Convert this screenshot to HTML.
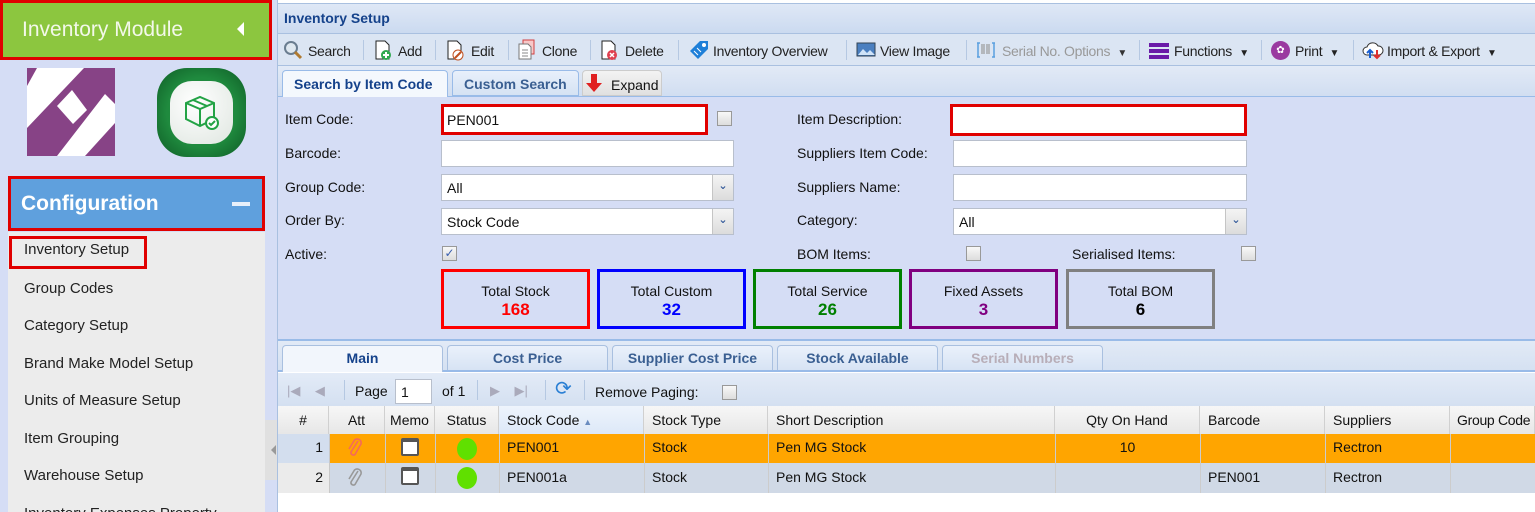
<!DOCTYPE html>
<html><head><meta charset="utf-8"><style>
*{box-sizing:border-box;margin:0;padding:0}
html,body{width:1535px;height:512px;overflow:hidden}
body{background:#fff;font-family:"Liberation Sans","DejaVu Sans",sans-serif;font-size:14px;color:#111;position:relative;white-space:nowrap}
.a{position:absolute}
.side{left:0;top:0;width:277px;height:512px;background:#d5ddf5}
.item{left:8px;width:257px;height:37px;background:#ececec;color:#222;padding:10px 0 0 16px;font-size:15px}
.inp{background:#fff;border:1px solid #b8bfcc;height:27px;padding:5px 5px;font-size:14px}
.sel .arr{position:absolute;right:0;top:0;width:21px;height:25px;background:linear-gradient(#f4f4f4,#dcdcdc);border-left:1px solid #c5c5c5;color:#345a9a;font-size:11px;text-align:center;line-height:22px;font-weight:bold}
.cb{width:15px;height:15px;border:1px solid #999;background:linear-gradient(#f8f8f8,#ddd)}
.lbl{font-size:14px;color:#111}
.tot{width:149px;height:60px;border:3px solid;text-align:center;font-size:14px;padding-top:11px;background:#d5ddf5}
.tot b{display:block;font-size:17px;margin-top:1px}
.tb{font-size:14px;color:#222;top:43px;letter-spacing:-0.3px}
.sep{top:40px;width:1px;height:20px;background:#b5c8e2}
.gt{top:345px;height:25px;border:1px solid #a9c0e0;border-bottom:none;border-radius:4px 4px 0 0;background:linear-gradient(#eaf1fb,#d7e3f4);color:#3a5f92;font-weight:bold;font-size:14px;text-align:center;padding-top:4px}
.hc{top:406px;height:29px;border-right:1px solid #d0d0d0;padding:6px 8px;font-size:14px;background:linear-gradient(#f7f7f7,#e6e6e6);overflow:hidden}
.r1{top:434px;height:29px;background:#ffa500}
.r2{top:463px;height:30px;background:#d0d9e6}
.c{font-size:14px;padding:5px 8px}
</style></head><body>
<div class="a side"></div>
<div class="a" style="left:0;top:0;width:272px;height:60px;background:#8cc63f;border:3px solid #e00000"></div>
<div class="a" style="left:22px;top:18px;color:#f3f8ea;font-size:21px">Inventory Module</div>
<div class="a" style="left:237px;top:22px;width:0;height:0;border-top:7px solid transparent;border-bottom:7px solid transparent;border-right:7px solid #fff"></div>
<svg class="a" style="left:27px;top:68px" width="88" height="88" viewBox="0 0 88 88"><rect width="88" height="88" fill="#874386"/><polygon points="10,0 57,0 0,60 0,18" fill="#fff"/><polygon points="30,38 45,22 60,42 46,56" fill="#fff"/><polygon points="78,26 88,36 88,55 58,88 30,88" fill="#fff"/></svg>
<div class="a" style="left:157px;top:68px;width:89px;height:89px;border-radius:30px;background:radial-gradient(circle,#1f8a3e 55%,#0e5a25);"></div>
<div class="a" style="left:170px;top:81px;width:63px;height:63px;border-radius:22px;background:radial-gradient(circle at 40% 35%,#fff,#dfe6e0)"></div>
<svg class="a" style="left:182px;top:93px" width="40" height="40" viewBox="0 0 40 40" fill="none" stroke="#23a345" stroke-width="2"><path d="M4 10 L18 4 L32 10 L32 26 L18 33 L4 26 Z M4 10 L18 16 L32 10 M18 16 V33 M11 7 L25 13"/><circle cx="30" cy="30" r="6" fill="#fff"/><path d="M27 30 l2 2 l4 -4"/></svg>
<div class="a" style="left:8px;top:176px;width:257px;height:55px;background:#5fa0dd;border:3px solid #e00000"></div>
<div class="a" style="left:21px;top:192px;color:#fff;font-weight:bold;font-size:21px">Configuration</div>
<div class="a" style="left:232px;top:202px;width:18px;height:4px;background:#e8f0fa"></div>
<div class="a" style="left:8px;top:232px;width:257px;height:280px;background:#ececec"></div>
<div class="a item" style="top:232px;padding-top:9px">Inventory Setup</div>
<div class="a" style="left:9px;top:236px;width:138px;height:33px;border:3px solid #e00000"></div>
<div class="a item" style="top:270px">Group Codes</div>
<div class="a item" style="top:307px">Category Setup</div>
<div class="a item" style="top:345px">Brand Make Model Setup</div>
<div class="a item" style="top:382px">Units of Measure Setup</div>
<div class="a item" style="top:420px">Item Grouping</div>
<div class="a item" style="top:457px">Warehouse Setup</div>
<div class="a item" style="top:495px">Inventory Expenses Property</div>
<div class="a" style="left:265px;top:420px;width:12px;height:60px;background:#e0e0e0"></div>
<div class="a" style="left:271px;top:445px;border-top:5px solid transparent;border-bottom:5px solid transparent;border-right:5px solid #999"></div>

<div class="a" style="left:277px;top:0;width:1258px;height:512px;background:#fff;border-left:1px solid #a9c0e0"></div>
<div class="a" style="left:278px;top:3px;width:1257px;height:31px;background:linear-gradient(#dfe8f6,#cbdaf0);border-top:1px solid #a9c0e0;border-bottom:1px solid #a9c0e0"></div>
<div class="a" style="left:284px;top:10px;color:#15428b;font-weight:bold;font-size:14px">Inventory Setup</div>
<div class="a" style="left:278px;top:34px;width:1257px;height:32px;background:#dbe5f3;border-bottom:1px solid #a9c0e0"></div>
<svg class="a" style="left:283px;top:40px" width="20" height="20"><circle cx="8" cy="8" r="6" fill="#dfe8f0" stroke="#6a7d90" stroke-width="2"/><line x1="12" y1="12" x2="18" y2="18" stroke="#b07a30" stroke-width="3"/></svg>
<div class="a tb" style="left:308px">Search</div><div class="a sep" style="left:363px"></div>
<svg class="a" style="left:373px;top:39px" width="20" height="22"><path d="M3 2h9l4 4v14H3z" fill="#fff" stroke="#222"/><circle cx="13" cy="16" r="5" fill="#2fa84f"/><path d="M13 13v6M10 16h6" stroke="#fff" stroke-width="2"/></svg>
<div class="a tb" style="left:398px">Add</div><div class="a sep" style="left:435px"></div>
<svg class="a" style="left:445px;top:39px" width="20" height="22"><path d="M3 2h9l4 4v14H3z" fill="#fff" stroke="#222"/><circle cx="13" cy="16" r="5" fill="#fff" stroke="#c05020"/><path d="M10 19l6-6" stroke="#c05020" stroke-width="2"/></svg>
<div class="a tb" style="left:471px">Edit</div><div class="a sep" style="left:508px"></div>
<svg class="a" style="left:517px;top:39px" width="20" height="22"><rect x="6" y="1" width="11" height="14" fill="#f8c8c8" stroke="#d04040"/><path d="M2 5h9l3 3v12H2z" fill="#fff" stroke="#777"/><path d="M5 11h6M5 14h6M5 17h6" stroke="#888"/></svg>
<div class="a tb" style="left:542px">Clone</div><div class="a sep" style="left:590px"></div>
<svg class="a" style="left:599px;top:39px" width="20" height="22"><path d="M3 2h9l4 4v14H3z" fill="#fff" stroke="#222"/><circle cx="13" cy="16" r="5" fill="#e04050"/><path d="M11 14l4 4M15 14l-4 4" stroke="#fff" stroke-width="1.5"/></svg>
<div class="a tb" style="left:625px">Delete</div><div class="a sep" style="left:678px"></div>
<svg class="a" style="left:688px;top:39px" width="22" height="22"><path d="M2 12L12 2h8v8L10 20z" fill="#1e7fd8"/><circle cx="16" cy="6" r="2" fill="#fff"/><path d="M6 12l4 4M9 9l4 4" stroke="#fff"/></svg>
<div class="a tb" style="left:713px">Inventory Overview</div><div class="a sep" style="left:846px"></div>
<svg class="a" style="left:856px;top:42px" width="20" height="16"><rect x="1" y="1" width="18" height="13" fill="#4a7fc0" stroke="#345"/><path d="M2 13l5-6 4 4 3-3 5 5z" fill="#cfe3f8"/></svg>
<div class="a tb" style="left:880px">View Image</div><div class="a sep" style="left:966px"></div>
<svg class="a" style="left:976px;top:41px" width="20" height="18"><path d="M2 2v14M18 2v14M1 2h3M1 16h3M16 2h3M16 16h3" stroke="#5aa0e0" stroke-width="1.5" fill="none"/><path d="M6 3v10M8 3v10M11 3v10M13 3v10" stroke="#999" stroke-width="1.2"/></svg>
<div class="a tb" style="left:1002px;color:#999">Serial No. Options &nbsp;<span style="color:#333;font-size:10px">▼</span></div><div class="a sep" style="left:1139px"></div>
<div class="a" style="left:1149px;top:43px;width:20px;height:4px;background:#6a1aa8;box-shadow:0 6px 0 #6a1aa8,0 12px 0 #6a1aa8"></div>
<div class="a tb" style="left:1174px">Functions &nbsp;<span style="font-size:10px">▼</span></div><div class="a sep" style="left:1261px"></div>
<div class="a" style="left:1271px;top:41px;width:19px;height:19px;border-radius:50%;background:#9a3aa0;color:#fff;font-size:10px;text-align:center;line-height:19px">✿</div>
<div class="a tb" style="left:1295px">Print &nbsp;<span style="font-size:10px">▼</span></div><div class="a sep" style="left:1353px"></div>
<svg class="a" style="left:1362px;top:40px" width="22" height="20"><path d="M5 15a4 4 0 010-8 6 6 0 0111-1 4 4 0 011 9z" fill="#fff" stroke="#333"/><path d="M8 18v-7M5 13l3-3 3 3" stroke="#1a5fd0" stroke-width="2" fill="none"/><path d="M15 10v7M12 15l3 3 3-3" stroke="#e03030" stroke-width="2" fill="none"/></svg>
<div class="a tb" style="left:1387px">Import &amp; Export &nbsp;<span style="font-size:10px">▼</span></div>

<div class="a" style="left:278px;top:66px;width:1257px;height:31px;background:linear-gradient(#e2eaf6,#d1def1);border-bottom:1px solid #99bbe8"></div>
<div class="a" style="left:282px;top:70px;width:166px;height:28px;background:#f4f8fd;border:1px solid #99bbe8;border-bottom:none;border-radius:4px 4px 0 0;color:#15428b;font-weight:bold;font-size:14px;padding:5px 0 0 11px">Search by Item Code</div>
<div class="a" style="left:452px;top:70px;width:127px;height:26px;background:linear-gradient(#e8f0fb,#d5e2f3);border:1px solid #99bbe8;border-radius:4px 4px 0 0;color:#3a5f92;font-weight:bold;font-size:14px;padding:5px 0 0 11px">Custom Search</div>
<div class="a" style="left:582px;top:70px;width:80px;height:26px;background:linear-gradient(#f3f3f3,#e0e0e0);border:1px solid #ccc;border-radius:4px 4px 0 0;font-size:14px;padding:6px 0 0 28px">Expand</div>
<svg class="a" style="left:585px;top:73px" width="18" height="20"><path d="M6 1h6v9h5L9 19 1 10h5z" fill="#e02020"/></svg>

<div class="a" style="left:278px;top:97px;width:1257px;height:244px;background:#d5ddf5;border-bottom:2px solid #99bbe8"></div>
<div class="a lbl" style="left:285px;top:111px">Item Code:</div>
<div class="a lbl" style="left:285px;top:145px">Barcode:</div>
<div class="a lbl" style="left:285px;top:179px">Group Code:</div>
<div class="a lbl" style="left:285px;top:212px">Order By:</div>
<div class="a lbl" style="left:285px;top:246px">Active:</div>
<div class="a inp" style="left:441px;top:104px;width:267px;height:31px;border:3px solid #e00000;padding:5px 3px">PEN001</div>
<div class="a cb" style="left:717px;top:111px"></div>
<div class="a inp" style="left:441px;top:140px;width:293px"></div>
<div class="a inp sel" style="left:441px;top:174px;width:293px">All<div class="arr">⌄</div></div>
<div class="a inp sel" style="left:441px;top:208px;width:293px">Stock Code<div class="arr">⌄</div></div>
<div class="a cb" style="left:442px;top:246px;color:#3a5fb0;font-size:12px;line-height:13px;text-align:center">✓</div>
<div class="a lbl" style="left:797px;top:111px">Item Description:</div>
<div class="a lbl" style="left:797px;top:145px">Suppliers Item Code:</div>
<div class="a lbl" style="left:797px;top:179px">Suppliers Name:</div>
<div class="a lbl" style="left:797px;top:212px">Category:</div>
<div class="a lbl" style="left:797px;top:246px">BOM Items:</div>
<div class="a lbl" style="left:1072px;top:246px">Serialised Items:</div>
<div class="a inp" style="left:950px;top:104px;width:297px;height:32px;border:3px solid #e00000"></div>
<div class="a inp" style="left:953px;top:140px;width:294px"></div>
<div class="a inp" style="left:953px;top:174px;width:294px"></div>
<div class="a inp sel" style="left:953px;top:208px;width:294px">All<div class="arr">⌄</div></div>
<div class="a cb" style="left:966px;top:246px"></div>
<div class="a cb" style="left:1241px;top:246px"></div>
<div class="a tot" style="left:441px;top:269px;border-color:#f00">Total Stock<b style="color:#f00">168</b></div>
<div class="a tot" style="left:597px;top:269px;border-color:#00f">Total Custom<b style="color:#00f">32</b></div>
<div class="a tot" style="left:753px;top:269px;border-color:#008000">Total Service<b style="color:#008000">26</b></div>
<div class="a tot" style="left:909px;top:269px;border-color:#800080">Fixed Assets<b style="color:#800080">3</b></div>
<div class="a tot" style="left:1066px;top:269px;border-color:#808080">Total BOM<b style="color:#000">6</b></div>

<div class="a" style="left:278px;top:341px;width:1257px;height:31px;background:linear-gradient(#e2eaf6,#d5e1f2);border-bottom:2px solid #99bbe8"></div>
<div class="a gt" style="left:282px;width:161px;background:#f2f6fc;height:27px;color:#15428b">Main</div>
<div class="a gt" style="left:447px;width:161px">Cost Price</div>
<div class="a gt" style="left:612px;width:161px">Supplier Cost Price</div>
<div class="a gt" style="left:777px;width:161px">Stock Available</div>
<div class="a gt" style="left:942px;width:161px;color:#b8aeb8">Serial Numbers</div>

<div class="a" style="left:278px;top:373px;width:1257px;height:33px;background:linear-gradient(#e3ebf7,#d4e0f1)"></div>
<div class="a" style="left:287px;top:383px;color:#aab;font-size:13px">|◀&nbsp;&nbsp;&nbsp;&nbsp;◀</div>
<div class="a sep" style="left:344px;top:380px"></div>
<div class="a lbl" style="left:355px;top:383px">Page</div>
<div class="a inp" style="left:395px;top:379px;width:37px;height:25px;padding:4px 5px">1</div>
<div class="a lbl" style="left:442px;top:383px">of 1</div>
<div class="a sep" style="left:477px;top:380px"></div>
<div class="a" style="left:490px;top:383px;color:#aab;font-size:13px">▶&nbsp;&nbsp;&nbsp;&nbsp;▶|</div>
<div class="a sep" style="left:545px;top:380px"></div>
<div class="a" style="left:555px;top:379px;color:#2a7fd4;font-size:20px;line-height:20px">⟳</div>
<div class="a sep" style="left:584px;top:380px"></div>
<div class="a lbl" style="left:595px;top:384px">Remove Paging:</div>
<div class="a cb" style="left:722px;top:385px"></div>

<div class="a hc" style="left:278px;width:51px;text-align:center">#</div>
<div class="a hc" style="left:329px;width:56px;text-align:center">Att</div>
<div class="a hc" style="left:385px;width:50px;text-align:center;padding:6px 0">Memo</div>
<div class="a hc" style="left:435px;width:64px;text-align:center;padding:6px 0">Status</div>
<div class="a hc" style="left:499px;width:145px;background:linear-gradient(#eef4fc,#dce8f8)">Stock Code <span style="color:#6a8cc0;font-size:9px">▲</span></div>
<div class="a hc" style="left:644px;width:124px">Stock Type</div>
<div class="a hc" style="left:768px;width:287px">Short Description</div>
<div class="a hc" style="left:1055px;width:145px;text-align:center">Qty On Hand</div>
<div class="a hc" style="left:1200px;width:125px">Barcode</div>
<div class="a hc" style="left:1325px;width:125px">Suppliers</div>
<div class="a hc" style="left:1450px;width:85px;padding-left:7px;letter-spacing:-0.3px">Group Code</div>

<div class="a r1" style="left:329px;width:1206px"></div>
<div class="a" style="left:278px;top:434px;width:51px;height:29px;background:#d3deee;text-align:right;padding:5px 6px">1</div>
<div class="a r2" style="left:278px;width:1257px"></div>
<div class="a" style="left:278px;top:463px;width:51px;height:30px;background:#ebebeb;text-align:right;padding:6px 6px">2</div>
<div class="a" style="left:329px;top:434px;width:1px;height:59px;background:#c8c8c8"></div>
<svg class="a" style="left:347px;top:437px" width="16" height="22"><path d="M11 4 L4 15 a2.5 2.5 0 0 0 4 2.5 L14 7 a4 4 0 0 0-6.5-4 L2 12" fill="none" stroke="#f46a5a" stroke-width="1.6"/></svg>
<svg class="a" style="left:347px;top:467px" width="16" height="22"><path d="M11 4 L4 15 a2.5 2.5 0 0 0 4 2.5 L14 7 a4 4 0 0 0-6.5-4 L2 12" fill="none" stroke="#999" stroke-width="1.6"/></svg>
<div class="a" style="left:401px;top:438px;width:18px;height:18px;border:2px solid #555;border-top-width:4px;background:#fff;border-radius:2px"></div>
<div class="a" style="left:401px;top:467px;width:18px;height:18px;border:2px solid #555;border-top-width:4px;background:#fff;border-radius:2px"></div>
<div class="a" style="left:457px;top:438px;width:20px;height:22px;border-radius:50%;background:#60e000"></div>
<div class="a" style="left:457px;top:467px;width:20px;height:22px;border-radius:50%;background:#60e000"></div>
<div class="a c" style="left:499px;top:434px">PEN001</div>
<div class="a c" style="left:644px;top:434px">Stock</div>
<div class="a c" style="left:768px;top:434px">Pen MG Stock</div>
<div class="a c" style="left:1055px;top:434px;width:145px;text-align:center">10</div>
<div class="a c" style="left:1325px;top:434px">Rectron</div>
<div class="a c" style="left:499px;top:464px">PEN001a</div>
<div class="a c" style="left:644px;top:464px">Stock</div>
<div class="a c" style="left:768px;top:464px">Pen MG Stock</div>
<div class="a c" style="left:1200px;top:464px">PEN001</div>
<div class="a c" style="left:1325px;top:464px">Rectron</div>
<div class="a" style="left:385px;top:434px;width:1px;height:59px;background:#ccc"></div>
<div class="a" style="left:435px;top:434px;width:1px;height:59px;background:#ccc"></div>
<div class="a" style="left:499px;top:434px;width:1px;height:59px;background:#ccc"></div>
<div class="a" style="left:644px;top:434px;width:1px;height:59px;background:#ccc"></div>
<div class="a" style="left:768px;top:434px;width:1px;height:59px;background:#ccc"></div>
<div class="a" style="left:1055px;top:434px;width:1px;height:59px;background:#ccc"></div>
<div class="a" style="left:1200px;top:434px;width:1px;height:59px;background:#ccc"></div>
<div class="a" style="left:1325px;top:434px;width:1px;height:59px;background:#ccc"></div>
<div class="a" style="left:1450px;top:434px;width:1px;height:59px;background:#ccc"></div>
</body></html>
